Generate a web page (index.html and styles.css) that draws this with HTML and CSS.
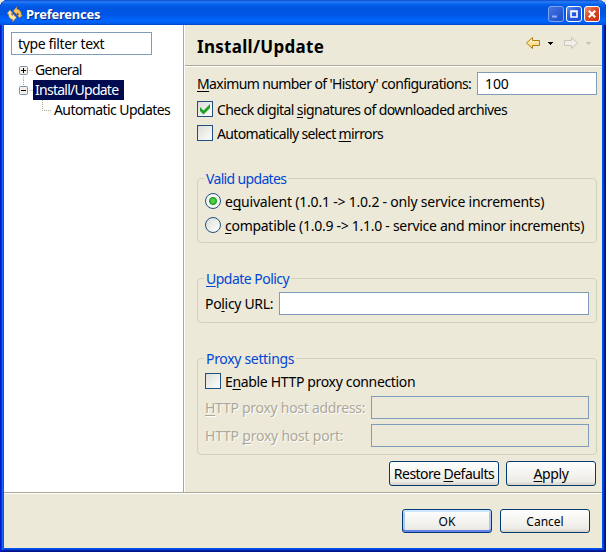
FILE: index.html
```html
<!DOCTYPE html>
<html lang="en">
<head>
<meta charset="utf-8">
<title>Preferences</title>
<link rel="stylesheet" href="styles.css">
</head>
<body>
<div class="window">
  <header class="titlebar">
    <svg class="app-icon" width="16" height="18" viewBox="0 0 16 18">
      <path d="M6 6 10 1.500v2.500c3 .5 4.500 3 4.500 6l1 .5-3 2.500-2.500-3h1.500C11.500 8.500 11 8 10 8v2z" fill="#f6c45c" stroke="#8a5a24" stroke-width=".5"/>
      <path d="M9.500 12.500 5.500 17v-2.500C2.500 14 1.500 11.500 1.500 9L0 8.500 3 5l3 3.500H4.500c0 1.500.3 2 1 2.200V8.500z" fill="#ffe49a" stroke="#a8732f" stroke-width=".5"/>
    </svg>
    <span class="caption">Preferences</span>
    <div class="controls">
      <span class="ctl ctl-dim"><svg width="14" height="14"><path d="M3 9.500h5" stroke="#8eb0f2" stroke-width="2"/></svg></span>
      <span class="ctl"><svg width="14" height="14"><path d="M4 4h6v6H4zM4 4.500h6" fill="none" stroke="#fff" stroke-width="1.600"/></svg></span>
      <span class="ctl ctl-close"><svg width="14" height="14"><path d="M3.800 3.800l6.400 6.400M10.200 3.800l-6.400 6.400" stroke="#fff" stroke-width="2.200"/></svg></span>
    </div>
  </header>
  <div class="body">
    <aside class="side">
      <div class="field filter"><span class="w-filter">type filter text</span></div>
      <ul class="tree">
        <li class="node">
          <svg class="twig" width="17" height="20"><path d="M11.500 10.500H15M5.500 16.500V20" class="dots"/><rect x="1.500" y="6.500" width="8" height="8" rx="1" class="box"/><path d="M3 10.500h5M5.500 8v5" stroke="#000"/></svg>
          <span class="label w-general">General</span>
        </li>
        <li class="node">
          <svg class="twig" width="17" height="20"><path d="M5.500 0V6M11.500 10.500H15" class="dots"/><rect x="1.500" y="6.500" width="8" height="8" rx="1" class="box"/><path d="M3 10.500h5" stroke="#000"/></svg>
          <span class="label selected w-install">Install/Update</span>
        </li>
        <li class="node child">
          <svg class="twig" width="10" height="20"><path d="M.5 0V10.500H10" class="dots"/></svg>
          <span class="label w-auto">Automatic Updates</span>
        </li>
      </ul>
    </aside>
    <main class="page">
      <div class="head">
        <h1>Install/Update</h1>
        <svg class="nav" width="68" height="16" viewBox="0 0 68 16">
          <defs><linearGradient id="g" x1="0" y1="0" x2="0" y2="1"><stop offset="0" stop-color="#fffbd8"/><stop offset="1" stop-color="#f5cf62"/></linearGradient></defs>
          <path d="M.5 8 6.500 2.500V5.500h7v5h-7v3z" fill="url(#g)" stroke="#b37b16"/>
          <path d="M22 7h5v1h-1v1h-1v1h-1V9h-1V8h-1z" fill="#000"/>
          <path d="M51.500 8 45.500 2.500V5.500h-7v5h7v3z" fill="#f0eee7" stroke="#c9c6b9"/>
          <path d="M60 7h5v1h-1v1h-1v1h-1V9h-1V8h-1z" fill="#c9c6b7"/>
        </svg>
      </div>
      <div class="form">
        <div class="row max"><span class="w-max"><u>M</u>aximum number of 'History' configurations:</span><div class="field"><span>100</span></div></div>
        <div class="row opt"><i class="check"><svg width="14" height="14"><path d="M2 5v4l3.500 3.500L12 6V2L5.500 8.500z" fill="#21a121"/></svg></i><span class="w-check">Check digital <u>s</u>ignatures of downloaded archives</span></div>
        <div class="row opt"><i class="check"></i><span class="w-mirror">Automatically select <u>m</u>irrors</span></div>

        <fieldset class="valid">
          <legend><span class="w-valid">Valid updates</span></legend>
          <div class="row opt"><i class="radio on"></i><span class="w-equiv">e<u>q</u>uivalent (1.0.1 -&gt; 1.0.2 - only service increments)</span></div>
          <div class="row opt"><i class="radio"></i><span class="w-compat"><u>c</u>ompatible (1.0.9 -&gt; 1.1.0 - service and minor increments)</span></div>
        </fieldset>

        <fieldset class="policy">
          <legend><span class="w-policy"><u>U</u>pdate Policy</span></legend>
          <div class="row"><span class="w-url">Po<u>l</u>icy URL:</span><div class="field"></div></div>
        </fieldset>

        <fieldset class="proxy">
          <legend><span class="w-proxy">Proxy settings</span></legend>
          <div class="row opt"><i class="check"></i><span class="w-enable">E<u>n</u>able HTTP proxy connection</span></div>
          <div class="row off"><span class="w-host"><u>H</u>TTP proxy host address:</span><div class="field"></div></div>
          <div class="row off"><span class="w-port">HTTP <u>p</u>roxy host port:</span><div class="field"></div></div>
        </fieldset>

        <div class="actions">
          <div class="btn restore"><span class="w-restore">Restore <u>D</u>efaults</span></div>
          <div class="btn"><span class="w-apply"><u>A</u>pply</span></div>
        </div>
      </div>
    </main>
  </div>
  <footer class="foot">
    <div class="btn small default">OK</div>
    <div class="btn small">Cancel</div>
  </footer>
</div>
</body>
</html>
```
FILE: styles.css
```css
* { box-sizing: border-box; }

body {
  margin: 0;
  background: #ece9d8;
  font: 14px/20px "Noto Sans", sans-serif;
  color: #000;
  overflow: hidden;
}

svg { display: block; flex: none; }
u { text-decoration: underline 1px; text-underline-offset: 2px; text-decoration-skip-ink: none; }
span { white-space: nowrap; }

/* the padding is the bevelled frame, drawn with stacked inset shadows */
.window {
  width: 606px;
  height: 552px;
  display: flex;
  flex-direction: column;
  padding: 0 4px 4px;
  border-radius: 8px 8px 0 0;
  background: #ece9d8;
  overflow: hidden;
  box-shadow: inset 1px 0 #0019cf, inset -1px -1px #00138c,
    inset 2px 0 #0831d9, inset -2px -2px #001ea0,
    inset 3px 0 #166aee, inset -3px -3px #0441d8,
    inset 4px 0 #0855dd, inset -4px -4px #0355ea;
}

.titlebar {
  height: 25px;
  flex: none;
  margin: 0 -4px;
  padding: 3px 6px 0 7px;
  display: flex;
  align-items: center;
  background: linear-gradient(#0a4ccb 0, #2a7cf8 2px, #0563ee 4px, #0054e0 8px, #0055e6 15px, #0066fd 20px, #005ef3 23px, #0047c8 25px);
}
.caption {
  margin-left: 3px;
  font-size: 13px;
  font-weight: bold;
  letter-spacing: -.24px;
  color: #fff;
  text-shadow: 1px 1px #0a2a88;
}
.controls { display: flex; gap: 2px; margin-left: auto; }
.ctl {
  width: 16px;
  height: 16px;
  border: 1px solid #fff;
  border-radius: 3px;
  background: linear-gradient(135deg, #5a8df2, #2458dc 50%, #1c4fd0);
}
.ctl-dim { border-color: #7fa3ee; background: linear-gradient(135deg, #4274e4, #1c4cc8); }
.ctl-close { background: linear-gradient(135deg, #f0906e, #dd4a25 45%, #c23310); }

.body { height: 467px; flex: none; display: flex; }
.side { width: 179px; background: #fff; padding: 7px 0 0 7px; }

.field {
  height: 23px;
  border: 1px solid #7f9db9;
  background: #fff;
  line-height: 21px;
}
.filter { width: 141px; padding-left: 6px; }

.tree { list-style: none; margin: 5px 0 0 7px; padding: 0; }
.node { display: flex; height: 20px; }
.child { padding-left: 24px; }
.child .label { padding-left: 2px; }
.dots { fill: none; stroke: #a8a593; stroke-dasharray: 1 1; }
.box { fill: #f2f0ea; stroke: #7b93ae; }
.selected { width: 91px; margin-left: -2px; padding-left: 2px; background: #000b50; color: #fff; }

.page { flex: 1; border-left: 1px solid #aca899; box-shadow: inset 1px 0 #fff; }
.head {
  height: 41px;
  margin-left: 1px;
  padding: 0 8px 0 12px;
  display: flex;
  align-items: center;
  border-bottom: 1px solid #aca899;
  box-shadow: 0 1px #fff;
}
h1 { margin: 3px auto 0 0; font-size: 17px; line-height: 22px; letter-spacing: .3px; }
.nav { margin: -4px 0 0; }

.form { padding: 6px 5px 0 13px; }
.row { display: flex; align-items: center; }
.row .field { flex: 1; }
.max { height: 23px; margin-bottom: 2px; }
.max > span { width: 280px; }
.max .field { flex: none; width: 120px; padding-left: 7px; letter-spacing: -.1px; }
.opt { height: 24px; gap: 4px; }
.opt > span { padding-top: 2px; }

.check, .radio {
  width: 16px;
  height: 16px;
  flex: none;
  border: 1px solid #1c5180;
  background: linear-gradient(135deg, #dcdcd7, #fff);
}
.radio { border-color: #21517f; border-radius: 50%; }
.radio.on { background: radial-gradient(circle, #4fd24b 0 1.5px, #21a121 3.5px, #f6f6f3 4.5px); }

fieldset {
  min-width: 0;
  margin: 0;
  padding: 0 7px;
  border: 1px solid #d0d0bf;
  border-radius: 4px;
}
legend { height: 18px; margin-left: -1px; padding: 0 2px; color: #0046d5; }
.valid { height: 74px; margin-top: 24px; }
.valid .row:first-of-type { margin-top: 2px; }
.policy { height: 54px; margin-top: 26px; }
.policy .row { margin-top: 5px; }
.policy .row > span { width: 74px; }
.proxy { height: 106px; margin-top: 26px; }
.proxy .opt { margin-top: 2px; }
.off { margin-top: 3px; color: #aca899; text-shadow: 1px 1px #fff; }
.off > span { width: 166px; }
.off .field { background: none; }
.off + .off { margin-top: 5px; }

.actions { display: flex; justify-content: flex-end; gap: 7px; margin: 6px 1px 0 0; }
.btn {
  width: 90px;
  height: 25px;
  border: 1px solid #003c74;
  border-radius: 3px;
  background: linear-gradient(#fff, #f2f1ec 60%, #ecebe5 85%, #d6d0c5);
  line-height: 24px;
  text-align: center;
}
.restore { width: 110px; }
.foot {
  flex: 1;
  display: flex;
  justify-content: flex-end;
  gap: 8px;
  padding: 16px 12px 0 0;
  border-top: 1px solid #aca899;
  box-shadow: inset 0 1px #fff;
}
.small { height: 24px; font-size: 12px; }
.default { box-shadow: inset 0 2px #cee7ff, inset 0 -2px #6982ee, inset 2px 0 #a9c6f6, inset -2px 0 #a9c6f6; }

.w-filter { letter-spacing: -.36px; }
.w-general { letter-spacing: -.7px; }
.w-install { letter-spacing: -.74px; }
.w-auto { letter-spacing: -.58px; }
.w-max { letter-spacing: -.6px; }
.w-check { letter-spacing: -.57px; }
.w-mirror { letter-spacing: -.63px; }
.w-equiv { letter-spacing: -.21px; }
.w-compat { letter-spacing: -.28px; }
.w-url { letter-spacing: -.32px; }
.w-valid { letter-spacing: -.66px; }
.w-policy { letter-spacing: -.52px; }
.w-proxy { letter-spacing: -.32px; }
.w-enable { letter-spacing: -.34px; }
.w-host { letter-spacing: -.28px; }
.w-port { letter-spacing: -.22px; }
.w-restore { letter-spacing: -.52px; }
.w-apply { letter-spacing: -.42px; }
```
